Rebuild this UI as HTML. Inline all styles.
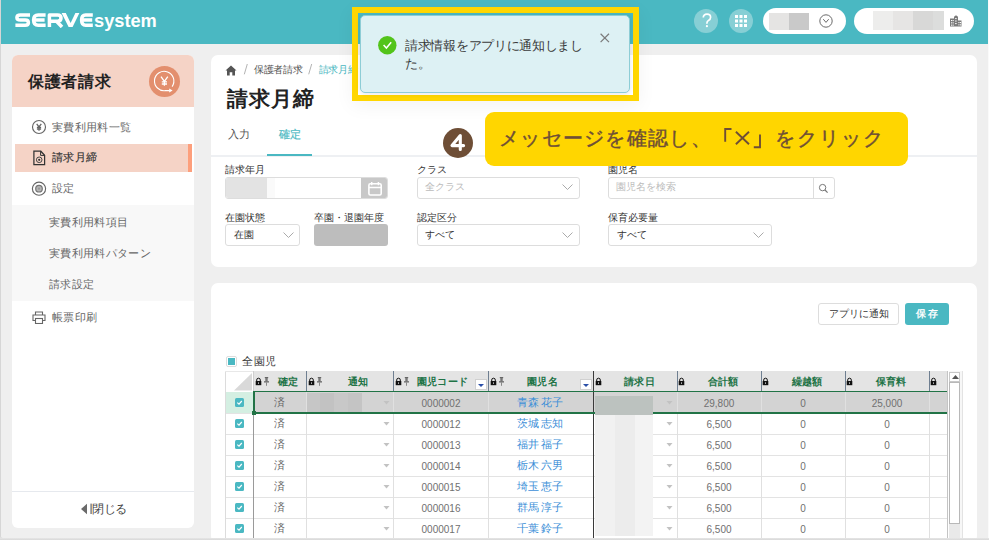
<!DOCTYPE html>
<html lang="ja">
<head>
<meta charset="utf-8">
<style>
*{box-sizing:border-box;margin:0;padding:0}
html,body{width:989px;height:540px;overflow:hidden;background:#fff}
body{font-family:"Liberation Sans",sans-serif;color:#333;position:relative}
.a{position:absolute}
#frame{left:0;top:0;width:988px;height:540px;background:#efefef;border-left:1.5px solid #d6d6d6;border-bottom:2px solid #dcdcdc;border-radius:0 0 0 4px;overflow:hidden}
#hdr{left:1px;top:0;width:987px;height:43.5px;background:#4ab8c2}
.logo{left:15px;top:10px;color:#fff;font-weight:bold;white-space:nowrap}
.hc{width:24px;height:24px;border-radius:50%;background:#87cfd5}
.pill{background:#fff;border-radius:13px}
.card{background:#fff;border-radius:7px}
.t{white-space:nowrap;line-height:1}
</style>
</head>
<body>
<div id="frame" class="a"></div>
<div id="hdr" class="a"></div>
<div class="a" style="left:988px;top:0;width:1px;height:540px;background:#fafafa"></div>

<!-- logo -->
<svg class="a" style="left:15px;top:13px" width="80" height="15" viewBox="0 0 80 15">
<g fill="none" stroke="#fff" stroke-width="3.5" stroke-linejoin="round">
<path d="M15 1.9 H5.4 Q1.9 1.9 1.9 4.5 Q1.9 7.1 5.4 7.1 H10.2 Q13.4 7.1 13.4 9.7 Q13.4 12.2 10.2 12.2 H0.4"/>
<path d="M30.6 1.9 H23.2 Q18.6 1.9 18.6 7 Q18.6 12.2 23.2 12.2 H30.6 M20.2 7 H29.6"/>
<path d="M34.4 14 V1.9 H42.6 Q46 1.9 46 5.1 Q46 8.2 42.6 8.2 H35.5 M41.5 8.2 L47 14"/>
<path d="M77.8 1.9 H70.6 Q66.6 1.9 66.6 7 Q66.6 12.2 70.6 12.2 H77.8 M68.2 7 H77.2"/>
</g>
<path d="M46.6 0 H50.8 L55.6 10 L60.4 0 H64.4 L57.6 14 H53.6 Z" fill="#fff"/>
</svg>
<div class="a t" style="left:94px;top:11.5px;font-size:18.5px;font-weight:bold;color:#fff;transform:scaleX(0.985);transform-origin:0 0">system</div>

<!-- header icons -->
<div class="a hc" style="left:694px;top:9px"></div>
<svg class="a" style="left:701px;top:13px" width="12" height="15" viewBox="0 0 12 15"><path d="M2.3 4.6 Q2.3 1.2 6 1.2 Q9.6 1.2 9.6 4.3 Q9.6 6.4 7.4 7.5 Q5.9 8.3 5.9 10.2 V10.8" fill="none" stroke="#fff" stroke-width="1.7"/><circle cx="5.9" cy="13.2" r="1.1" fill="#fff"/></svg>
<div class="a hc" style="left:729px;top:9px"></div>
<svg class="a" style="left:735px;top:15px" width="12" height="12" viewBox="0 0 12 12" fill="#fff">
<rect x="0" y="0" width="3" height="3"/><rect x="4.5" y="0" width="3" height="3"/><rect x="9" y="0" width="3" height="3"/>
<rect x="0" y="4.5" width="3" height="3"/><rect x="4.5" y="4.5" width="3" height="3"/><rect x="9" y="4.5" width="3" height="3"/>
<rect x="0" y="9" width="3" height="3"/><rect x="4.5" y="9" width="3" height="3"/><rect x="9" y="9" width="3" height="3"/>
</svg>
<div class="a pill" style="left:763px;top:8px;width:83px;height:26px"></div>
<div class="a" style="left:769px;top:13px;width:20px;height:17px;background:#e5e4e3"></div>
<div class="a" style="left:789px;top:13px;width:20px;height:17px;background:#c9c9c9"></div>
<svg class="a" style="left:818.5px;top:14px" width="14" height="14" viewBox="0 0 14 14"><circle cx="7" cy="7" r="6.2" fill="none" stroke="#6a6a6a" stroke-width="1"/><path d="M4.3 5.2 L7 8.4 L9.7 5.2" fill="none" stroke="#6a6a6a" stroke-width="1"/></svg>
<div class="a pill" style="left:854px;top:8px;width:120px;height:26px"></div>
<div class="a" style="left:873px;top:11px;width:20px;height:19px;background:#ededec"></div>
<div class="a" style="left:893px;top:11px;width:20px;height:19px;background:#e6e5e4"></div>
<div class="a" style="left:913px;top:11px;width:20px;height:19px;background:#d8d8d7"></div>
<div class="a" style="left:933px;top:11px;width:11px;height:19px;background:#dcdddc"></div>
<svg class="a" style="left:950px;top:15px" width="12" height="12" viewBox="0 0 12 12"><path d="M0 3.5 H4 V1.8 L6 0.3 L8 1.8 V5.5 H11.5 V11.5 H0 Z" fill="#7a7a7a"/><g fill="#fff"><rect x="1" y="5" width="1.1" height="1.1"/><rect x="2.6" y="5" width="1.1" height="1.1"/><rect x="1" y="7.3" width="1.1" height="1.1"/><rect x="2.6" y="7.3" width="1.1" height="1.1"/><rect x="1" y="9.6" width="1.1" height="1.1"/><rect x="2.6" y="9.6" width="1.1" height="1.1"/><rect x="5.2" y="3" width="1.4" height="1.1"/><rect x="5.2" y="5.5" width="1.4" height="1.1"/><rect x="5.2" y="8" width="1.4" height="1.1"/><rect x="8.4" y="7" width="1.1" height="1.1"/><rect x="10" y="7" width="1.1" height="1.1"/><rect x="8.4" y="9.3" width="1.1" height="1.1"/><rect x="10" y="9.3" width="1.1" height="1.1"/></g></svg>

<!-- sidebar -->
<div class="a card" style="left:12px;top:55px;width:182.4px;height:473px;border-radius:6px;overflow:hidden"><div class="a" style="left:1px;top:0;width:181px;height:473px">
  <div class="a" style="left:-1px;top:0;width:183px;height:52px;background:#f5d3c6"></div>
  <div class="a t" style="left:15px;top:19px;font-size:16px;letter-spacing:0.7px;font-weight:bold;color:#222">保護者請求</div>
  <div class="a" style="left:136px;top:11px;width:31px;height:31px;border-radius:50%;background:#e38f6e"></div>
  <svg class="a" style="left:136px;top:11px" width="31" height="31" viewBox="149 66 31 31"><path d="M172.1 86.6 A9.7 9.7 0 1 0 165.6 90.6 H169.6" fill="none" stroke="#fff" stroke-width="1.1"/><path d="M169.2 88.6 L172.6 90.6 L169.2 92.5 Z" fill="#fff"/><path d="M161 76.6 L164.4 81.4 L167.8 76.6 M164.4 81.4 V85.8 M161.8 81.9 H167 M161.8 84 H167" fill="none" stroke="#fff" stroke-width="1.3"/></svg>
  <!-- items -->
  <svg class="a" style="left:18px;top:64px" width="16" height="16" viewBox="31 119 16 16"><circle cx="39" cy="127" r="6.5" fill="none" stroke="#666" stroke-width="1.15"/><path d="M36.7 123.9 L39 126.9 L41.3 123.9 M39 126.9 V130.7 M36.9 127.4 H41.1 M36.9 129 H41.1" fill="none" stroke="#666" stroke-width="1.3"/></svg>
  <div class="a t" style="left:39px;top:67px;font-size:11px;letter-spacing:0.35px;color:#666">実費利用料一覧</div>
  <div class="a" style="left:2px;top:89px;width:177px;height:28px;background:#f5d3c6"></div>
  <div class="a" style="left:175px;top:89px;width:4px;height:28px;background:#fd9f7c"></div>
  <svg class="a" style="left:19px;top:94px" width="15" height="18" viewBox="32 149 15 18"><path d="M33.9 151.2 H40.8 L44.6 155.2 V164.5 H33.9 Z" fill="none" stroke="#333" stroke-width="1.25"/><path d="M40.6 151.2 V155.4 H44.6" fill="none" stroke="#333" stroke-width="1"/><circle cx="39.2" cy="159.8" r="2.8" fill="none" stroke="#444" stroke-width="1"/><circle cx="39.2" cy="159.8" r="1.1" fill="#333"/></svg>
  <div class="a t" style="left:39px;top:97px;font-size:11px;letter-spacing:0.35px;color:#333;-webkit-text-stroke:0.15px #333">請求月締</div>
  <svg class="a" style="left:18px;top:125px" width="16" height="16" viewBox="31 180 16 16"><circle cx="39" cy="188.7" r="6.6" fill="none" stroke="#666" stroke-width="1.15"/><circle cx="39" cy="188.7" r="3.3" fill="#b5b5b5" stroke="#777" stroke-width="1.2"/><circle cx="39" cy="188.7" r="1.1" fill="#999"/></svg>
  <div class="a t" style="left:39px;top:128px;font-size:11px;letter-spacing:0.35px;color:#666">設定</div>
  <div class="a" style="left:-1px;top:150px;width:183px;height:96px;background:#f8f8f8"></div>
  <div class="a t" style="left:36px;top:162px;font-size:11px;letter-spacing:0.35px;color:#666">実費利用料項目</div>
  <div class="a t" style="left:36px;top:193px;font-size:11px;letter-spacing:0.35px;color:#666">実費利用料パターン</div>
  <div class="a t" style="left:36px;top:224px;font-size:11px;letter-spacing:0.35px;color:#666">請求設定</div>
  <svg class="a" style="left:19px;top:256px" width="14" height="13" viewBox="0 0 14 13"><path d="M3.5 4 V1 H10.5 V4" fill="none" stroke="#666" stroke-width="1.1"/><path d="M3 9.5 H1 V4 H13 V9.5 H11" fill="none" stroke="#666" stroke-width="1.1"/><rect x="3.5" y="7.5" width="7" height="5" fill="none" stroke="#666" stroke-width="1.1"/></svg>
  <div class="a t" style="left:39px;top:257px;font-size:11px;letter-spacing:0.35px;color:#666">帳票印刷</div>
  <div class="a" style="left:-1px;top:436px;width:183px;height:1px;background:#e6e9ee"></div>
  <svg class="a" style="left:67px;top:447px" width="12" height="14" viewBox="80 502 12 14"><path d="M81 509 L87 503.8 V514.2 Z" fill="#6a6a6a"/><rect x="90.4" y="503.6" width="1.4" height="10.4" fill="#7a7a7a"/></svg>
  <div class="a t" style="left:79px;top:448px;font-size:12px;letter-spacing:-0.4px;color:#444">閉じる</div></div>
</div>

<!-- main card 1 -->
<div class="a card" style="left:211px;top:55px;width:766px;height:212px;overflow:hidden">
  <svg class="a" style="left:14px;top:10px" width="12" height="11" viewBox="0 0 12 11"><path d="M6 0.5 L11.5 5.5 H10 V10.5 H7.3 V7.3 H4.7 V10.5 H2 V5.5 H0.5 Z" fill="#555"/></svg>
  <svg class="a" style="left:30px;top:8px" width="8" height="12" viewBox="0 0 8 12"><path d="M6.3 1 L3.3 11.3" stroke="#aaa" stroke-width="0.9"/></svg>
  <div class="a t" style="left:43px;top:10px;font-size:10px;letter-spacing:-0.3px;color:#555">保護者請求</div>
  <svg class="a" style="left:95px;top:8px" width="8" height="12" viewBox="0 0 8 12"><path d="M5.7 1 L2.7 11.3" stroke="#aaa" stroke-width="0.9"/></svg>
  <div class="a t" style="left:107.5px;top:10px;font-size:10px;letter-spacing:-0.2px;color:#4ab8c2">請求月締</div>
  <div class="a t" style="left:15.5px;top:32.5px;font-size:21px;letter-spacing:1.2px;font-weight:bold;color:#222">請求月締</div>
  <div class="a t" style="left:17px;top:74px;font-size:11px;letter-spacing:0.3px;color:#555">入力</div>
  <div class="a t" style="left:68px;top:74px;font-size:11px;letter-spacing:0.3px;color:#4ab8c2;-webkit-text-stroke:0.2px #4ab8c2">確定</div>
  <div class="a" style="left:0;top:100px;width:766px;height:2px;background:#eef0f3"></div>
  <div class="a" style="left:56px;top:99px;width:45px;height:2px;background:#4ab8c2"></div>
  <!-- form row 1 -->
  <div class="a t" style="left:14px;top:110px;font-size:10px;color:#333">請求年月</div>
  <div class="a" style="left:14px;top:122px;width:163px;height:22px;border:1px solid #ddd;border-radius:3px;overflow:hidden">
    <div class="a" style="left:0;top:0;width:41px;height:20px;background:#e3e3e3"></div><div class="a" style="left:41px;top:0;width:8px;height:20px;background:#fafafa"></div>
    <div class="a" style="left:135px;top:0;width:27px;height:20px;background:#c8c8c8"></div>
    <svg class="a" style="left:140.5px;top:2.5px" width="16" height="16" viewBox="0 0 16 16"><rect x="1.9" y="2.8" width="12.3" height="11.2" rx="1.4" fill="none" stroke="#fff" stroke-width="1.6"/><path d="M1.9 6.4 H14.2 M4.7 1 V4.2 M11.4 1 V4.2" stroke="#fff" stroke-width="1.5"/></svg>
  </div>
  <div class="a t" style="left:206px;top:110px;font-size:10px;color:#333">クラス</div>
  <div class="a" style="left:206px;top:122px;width:163px;height:22px;border:1px solid #ddd;border-radius:3px"></div>
  <div class="a t" style="left:214px;top:127px;font-size:10px;color:#bbb">全クラス</div>
  <svg class="a" style="left:351px;top:129px" width="11" height="7" viewBox="0 0 11 7"><path d="M0.5 0.5 L5.5 5.5 L10.5 0.5" fill="none" stroke="#aaa" stroke-width="1"/></svg>
  <div class="a t" style="left:397px;top:110px;font-size:10px;color:#333">園児名</div>
  <div class="a" style="left:397px;top:122px;width:227px;height:22px;border:1px solid #ddd;border-radius:3px"></div>
  <div class="a" style="left:602px;top:122px;width:1px;height:22px;background:#ddd"></div>
  <div class="a t" style="left:405px;top:127px;font-size:10px;color:#bbb">園児名を検索</div>
  <svg class="a" style="left:607px;top:128px" width="11" height="11" viewBox="0 0 11 11"><circle cx="4.6" cy="4.6" r="3.2" fill="none" stroke="#777" stroke-width="1"/><path d="M7 7 L9.6 9.6" stroke="#777" stroke-width="1.2"/></svg>
  <!-- form row 2 -->
  <div class="a t" style="left:14px;top:158px;font-size:10px;color:#333">在園状態</div>
  <div class="a" style="left:14px;top:169px;width:75px;height:22px;border:1px solid #ddd;border-radius:3px"></div>
  <div class="a t" style="left:23px;top:175px;font-size:10px;color:#333">在園</div>
  <svg class="a" style="left:72px;top:177px" width="11" height="7" viewBox="0 0 11 7"><path d="M0.5 0.5 L5.5 5.5 L10.5 0.5" fill="none" stroke="#aaa" stroke-width="1"/></svg>
  <div class="a t" style="left:103px;top:158px;font-size:10px;color:#333">卒園・退園年度</div>
  <div class="a" style="left:103px;top:169px;width:74px;height:22px;background:#bdbdbd;border-radius:3px"></div>
  <div class="a t" style="left:206px;top:158px;font-size:10px;color:#333">認定区分</div>
  <div class="a" style="left:206px;top:169px;width:163px;height:22px;border:1px solid #ddd;border-radius:3px"></div>
  <div class="a t" style="left:214px;top:175px;font-size:10px;color:#333">すべて</div>
  <svg class="a" style="left:351px;top:177px" width="11" height="7" viewBox="0 0 11 7"><path d="M0.5 0.5 L5.5 5.5 L10.5 0.5" fill="none" stroke="#aaa" stroke-width="1"/></svg>
  <div class="a t" style="left:397px;top:158px;font-size:10px;color:#333">保育必要量</div>
  <div class="a" style="left:397px;top:169px;width:164px;height:22px;border:1px solid #ddd;border-radius:3px"></div>
  <div class="a t" style="left:406px;top:175px;font-size:10px;color:#333">すべて</div>
  <svg class="a" style="left:542px;top:177px" width="11" height="7" viewBox="0 0 11 7"><path d="M0.5 0.5 L5.5 5.5 L10.5 0.5" fill="none" stroke="#aaa" stroke-width="1"/></svg>
</div>
<!-- main card 2 -->
<div class="a card" style="left:211px;top:283px;width:766px;height:260px;overflow:hidden">
  <div class="a" style="left:607px;top:20px;width:81px;height:22px;border:1px solid #ddd;border-radius:3px;background:#fff"></div>
  <div class="a t" style="left:618px;top:26px;font-size:10px;color:#333">アプリに通知</div>
  <div class="a" style="left:694px;top:20px;width:44px;height:22px;border-radius:3px;background:#4ab8c2"></div>
  <div class="a t" style="left:705px;top:26px;font-size:10px;color:#fff;letter-spacing:1.6px;-webkit-text-stroke:0.35px #fff">保存</div>
  <div class="a" style="left:15px;top:73px;width:11px;height:11px;border:1px solid #ddd;border-radius:2px;background:#fff"></div>
  <div class="a" style="left:17px;top:75px;width:7px;height:7px;background:#4ab8c2"></div>
  <div class="a t" style="left:31px;top:73px;font-size:11px;letter-spacing:0.6px;color:#333">全園児</div>
</div>



<div id="grid" class="a" style="left:225px;top:371px;width:738px;height:169px;overflow:hidden">
<div class="a" style="left:28px;top:0px;width:694px;height:20px;background:#e4e4e4"></div>
<div class="a" style="left:0px;top:0px;width:28px;height:20px;background:#fff"></div>
<svg class="a" style="left:0;top:0" width="28" height="20" viewBox="0 0 28 20"><path d="M27 2 V19.5 H9 Z" fill="#d9d9d9"/></svg>
<div class="a" style="left:0px;top:21px;width:722px;height:21px;background:#d3d3d3"></div>
<div class="a" style="left:0px;top:21px;width:28px;height:21px;background:#d4efe2"></div>
<div class="a" style="left:0px;top:42px;width:722px;height:21px;background:#fff"></div>
<div class="a" style="left:0px;top:63px;width:722px;height:21px;background:#fff"></div>
<div class="a" style="left:0px;top:84px;width:722px;height:21px;background:#fff"></div>
<div class="a" style="left:0px;top:105px;width:722px;height:21px;background:#fff"></div>
<div class="a" style="left:0px;top:126px;width:722px;height:21px;background:#fff"></div>
<div class="a" style="left:0px;top:147px;width:722px;height:21px;background:#fff"></div>
<div class="a" style="left:0px;top:42px;width:722px;height:1px;background:#e3e3e3"></div>
<div class="a" style="left:0px;top:63px;width:722px;height:1px;background:#e3e3e3"></div>
<div class="a" style="left:0px;top:84px;width:722px;height:1px;background:#e3e3e3"></div>
<div class="a" style="left:0px;top:105px;width:722px;height:1px;background:#e3e3e3"></div>
<div class="a" style="left:0px;top:126px;width:722px;height:1px;background:#e3e3e3"></div>
<div class="a" style="left:0px;top:147px;width:722px;height:1px;background:#e3e3e3"></div>
<div class="a" style="left:0px;top:168px;width:722px;height:1px;background:#e3e3e3"></div>
<div class="a" style="left:28px;top:21px;width:1px;height:160px;background:#9a9a9a"></div>
<div class="a" style="left:81px;top:21px;width:1px;height:160px;background:#e0e0e0"></div>
<div class="a" style="left:168px;top:21px;width:1px;height:160px;background:#e0e0e0"></div>
<div class="a" style="left:263px;top:21px;width:1px;height:160px;background:#e0e0e0"></div>
<div class="a" style="left:368px;top:21px;width:1px;height:160px;background:#e0e0e0"></div>
<div class="a" style="left:452px;top:21px;width:1px;height:160px;background:#e0e0e0"></div>
<div class="a" style="left:536px;top:21px;width:1px;height:160px;background:#e0e0e0"></div>
<div class="a" style="left:620px;top:21px;width:1px;height:160px;background:#e0e0e0"></div>
<div class="a" style="left:704px;top:21px;width:1px;height:160px;background:#e0e0e0"></div>
<div class="a" style="left:368px;top:0px;width:1px;height:170px;background:#3a3a3a"></div>
<div class="a" style="left:81px;top:0px;width:1px;height:20px;background:#6f7f91"></div>
<div class="a" style="left:168px;top:0px;width:1px;height:20px;background:#6f7f91"></div>
<div class="a" style="left:263px;top:0px;width:1px;height:20px;background:#6f7f91"></div>
<div class="a" style="left:452px;top:0px;width:1px;height:20px;background:#6f7f91"></div>
<div class="a" style="left:536px;top:0px;width:1px;height:20px;background:#6f7f91"></div>
<div class="a" style="left:620px;top:0px;width:1px;height:20px;background:#6f7f91"></div>
<div class="a" style="left:704px;top:0px;width:1px;height:20px;background:#6f7f91"></div>
<div class="a" style="left:28px;top:0px;width:1px;height:20px;background:#cfcfcf"></div>
<div class="a" style="left:0px;top:0px;width:1px;height:170px;background:#dcdcdc"></div>
<div class="a" style="left:0px;top:0px;width:28px;height:1px;background:#e8e8e8"></div>
<div class="a" style="left:722px;top:0px;width:1.2px;height:170px;background:#c4c4c4"></div>
<div class="a" style="left:28px;top:19.600000000000023px;width:694px;height:1.7px;background:#217346"></div>
<div class="a" style="left:28px;top:41.39999999999998px;width:694px;height:1.7px;background:#217346"></div>
<div class="a" style="left:28px;top:19.600000000000023px;width:1.6px;height:23px;background:#217346"></div>
<div class="a" style="left:27px;top:40px;width:4px;height:4px;background:#217346"></div>
<svg class="a" style="left:30px;top:6px" width="7" height="9" viewBox="0 0 7 9"><path d="M1.7 4.2 V3 A1.8 1.8 0 0 1 5.3 3 V4.2" fill="none" stroke="#111" stroke-width="1"/><rect x="0.7" y="4" width="5.6" height="4.2" fill="#111"/><rect x="3.1" y="5.4" width="0.9" height="1.4" fill="#e4e4e4"/></svg>
<svg class="a" style="left:39px;top:6px" width="5" height="9" viewBox="0 0 5 9"><rect x="0.8" y="0" width="3.4" height="1.2" fill="#666"/><rect x="1.3" y="1" width="2.4" height="3.4" fill="#777"/><rect x="0" y="4.2" width="5" height="1.3" fill="#666"/><rect x="2" y="5.3" width="1" height="3.5" fill="#888"/></svg>
<div class="a t" style="left:46px;top:6px;width:35px;text-align:center;font-size:10px;font-weight:bold;letter-spacing:0.3px;color:#217346">確定</div>
<svg class="a" style="left:83px;top:6px" width="7" height="9" viewBox="0 0 7 9"><path d="M1.7 4.2 V3 A1.8 1.8 0 0 1 5.3 3 V4.2" fill="none" stroke="#111" stroke-width="1"/><rect x="0.7" y="4" width="5.6" height="4.2" fill="#111"/><rect x="3.1" y="5.4" width="0.9" height="1.4" fill="#e4e4e4"/></svg>
<svg class="a" style="left:92px;top:6px" width="5" height="9" viewBox="0 0 5 9"><rect x="0.8" y="0" width="3.4" height="1.2" fill="#666"/><rect x="1.3" y="1" width="2.4" height="3.4" fill="#777"/><rect x="0" y="4.2" width="5" height="1.3" fill="#666"/><rect x="2" y="5.3" width="1" height="3.5" fill="#888"/></svg>
<div class="a t" style="left:99px;top:6px;width:69px;text-align:center;font-size:10px;font-weight:bold;letter-spacing:0.3px;color:#217346">通知</div>
<svg class="a" style="left:170px;top:6px" width="7" height="9" viewBox="0 0 7 9"><path d="M1.7 4.2 V3 A1.8 1.8 0 0 1 5.3 3 V4.2" fill="none" stroke="#111" stroke-width="1"/><rect x="0.7" y="4" width="5.6" height="4.2" fill="#111"/><rect x="3.1" y="5.4" width="0.9" height="1.4" fill="#e4e4e4"/></svg>
<svg class="a" style="left:179px;top:6px" width="5" height="9" viewBox="0 0 5 9"><rect x="0.8" y="0" width="3.4" height="1.2" fill="#666"/><rect x="1.3" y="1" width="2.4" height="3.4" fill="#777"/><rect x="0" y="4.2" width="5" height="1.3" fill="#666"/><rect x="2" y="5.3" width="1" height="3.5" fill="#888"/></svg>
<div class="a t" style="left:186px;top:6px;width:63px;text-align:center;font-size:10px;font-weight:bold;letter-spacing:0.3px;color:#217346">園児コード</div>
<svg class="a" style="left:265px;top:6px" width="7" height="9" viewBox="0 0 7 9"><path d="M1.7 4.2 V3 A1.8 1.8 0 0 1 5.3 3 V4.2" fill="none" stroke="#111" stroke-width="1"/><rect x="0.7" y="4" width="5.6" height="4.2" fill="#111"/><rect x="3.1" y="5.4" width="0.9" height="1.4" fill="#e4e4e4"/></svg>
<svg class="a" style="left:274px;top:6px" width="5" height="9" viewBox="0 0 5 9"><rect x="0.8" y="0" width="3.4" height="1.2" fill="#666"/><rect x="1.3" y="1" width="2.4" height="3.4" fill="#777"/><rect x="0" y="4.2" width="5" height="1.3" fill="#666"/><rect x="2" y="5.3" width="1" height="3.5" fill="#888"/></svg>
<div class="a t" style="left:281px;top:6px;width:73px;text-align:center;font-size:10px;font-weight:bold;letter-spacing:0.3px;color:#217346">園児名</div>
<svg class="a" style="left:370px;top:6px" width="7" height="9" viewBox="0 0 7 9"><path d="M1.7 4.2 V3 A1.8 1.8 0 0 1 5.3 3 V4.2" fill="none" stroke="#111" stroke-width="1"/><rect x="0.7" y="4" width="5.6" height="4.2" fill="#111"/><rect x="3.1" y="5.4" width="0.9" height="1.4" fill="#e4e4e4"/></svg>
<div class="a t" style="left:377px;top:6px;width:75px;text-align:center;font-size:10px;font-weight:bold;letter-spacing:0.3px;color:#217346">請求日</div>
<svg class="a" style="left:453px;top:6px" width="7" height="9" viewBox="0 0 7 9"><path d="M1.7 4.2 V3 A1.8 1.8 0 0 1 5.3 3 V4.2" fill="none" stroke="#111" stroke-width="1"/><rect x="0.7" y="4" width="5.6" height="4.2" fill="#111"/><rect x="3.1" y="5.4" width="0.9" height="1.4" fill="#e4e4e4"/></svg>
<div class="a t" style="left:460px;top:6px;width:76px;text-align:center;font-size:10px;font-weight:bold;letter-spacing:0.3px;color:#217346">合計額</div>
<svg class="a" style="left:537px;top:6px" width="7" height="9" viewBox="0 0 7 9"><path d="M1.7 4.2 V3 A1.8 1.8 0 0 1 5.3 3 V4.2" fill="none" stroke="#111" stroke-width="1"/><rect x="0.7" y="4" width="5.6" height="4.2" fill="#111"/><rect x="3.1" y="5.4" width="0.9" height="1.4" fill="#e4e4e4"/></svg>
<div class="a t" style="left:544px;top:6px;width:76px;text-align:center;font-size:10px;font-weight:bold;letter-spacing:0.3px;color:#217346">繰越額</div>
<svg class="a" style="left:621px;top:6px" width="7" height="9" viewBox="0 0 7 9"><path d="M1.7 4.2 V3 A1.8 1.8 0 0 1 5.3 3 V4.2" fill="none" stroke="#111" stroke-width="1"/><rect x="0.7" y="4" width="5.6" height="4.2" fill="#111"/><rect x="3.1" y="5.4" width="0.9" height="1.4" fill="#e4e4e4"/></svg>
<div class="a t" style="left:628px;top:6px;width:76px;text-align:center;font-size:10px;font-weight:bold;letter-spacing:0.3px;color:#217346">保育料</div>
<svg class="a" style="left:705px;top:6px" width="7" height="9" viewBox="0 0 7 9"><path d="M1.7 4.2 V3 A1.8 1.8 0 0 1 5.3 3 V4.2" fill="none" stroke="#111" stroke-width="1"/><rect x="0.7" y="4" width="5.6" height="4.2" fill="#111"/><rect x="3.1" y="5.4" width="0.9" height="1.4" fill="#e4e4e4"/></svg>
<div class="a" style="left:250px;top:8px;width:12px;height:11px;background:#fff;border:1px solid #d0d0d0"></div>
<svg class="a" style="left:253px;top:13px" width="6" height="3" viewBox="0 0 6 3"><path d="M0 0 H6 L3 3 Z" fill="#2b4fa8"/></svg>
<div class="a" style="left:355px;top:8px;width:12px;height:11px;background:#fff;border:1px solid #d0d0d0"></div>
<svg class="a" style="left:358px;top:13px" width="6" height="3" viewBox="0 0 6 3"><path d="M0 0 H6 L3 3 Z" fill="#2b4fa8"/></svg>
<div class="a" style="left:10px;top:27px;width:9px;height:9px;background:#4ab8c2;border-radius:1.5px"></div>
<svg class="a" style="left:11px;top:28px" width="7" height="7" viewBox="0 0 7 7"><path d="M1.3 3.6 L3 5.1 L5.8 2" fill="none" stroke="#fff" stroke-width="1.2"/></svg>
<div class="a t" style="left:28px;top:26px;width:53px;text-align:center;font-size:11px;color:#666">済</div>
<svg class="a" style="left:158px;top:30px" width="7" height="4" viewBox="0 0 7 4"><path d="M0.5 0 H6.5 L3.5 3.6 Z" fill="#c2c2c2"/></svg>
<div class="a t" style="left:168px;top:28px;width:96px;text-align:center;font-size:10px;color:#707070">0000002</div>
<div class="a t" style="left:263px;top:26px;width:104px;text-align:center;font-size:11px;letter-spacing:-0.2px;color:#3d8fd8">青森<span style="letter-spacing:0">&#8201;</span>花子</div>
<svg class="a" style="left:441px;top:30px" width="7" height="4" viewBox="0 0 7 4"><path d="M0.5 0 H6.5 L3.5 3.6 Z" fill="#c2c2c2"/></svg>
<div class="a t" style="left:452px;top:28px;width:84px;text-align:center;font-size:10px;color:#707070">29,800</div>
<div class="a t" style="left:536px;top:28px;width:84px;text-align:center;font-size:10px;color:#707070">0</div>
<div class="a t" style="left:620px;top:28px;width:84px;text-align:center;font-size:10px;color:#707070">25,000</div>
<div class="a" style="left:10px;top:48px;width:9px;height:9px;background:#4ab8c2;border-radius:1.5px"></div>
<svg class="a" style="left:11px;top:49px" width="7" height="7" viewBox="0 0 7 7"><path d="M1.3 3.6 L3 5.1 L5.8 2" fill="none" stroke="#fff" stroke-width="1.2"/></svg>
<div class="a t" style="left:28px;top:47px;width:53px;text-align:center;font-size:11px;color:#666">済</div>
<svg class="a" style="left:158px;top:51px" width="7" height="4" viewBox="0 0 7 4"><path d="M0.5 0 H6.5 L3.5 3.6 Z" fill="#c2c2c2"/></svg>
<div class="a t" style="left:168px;top:49px;width:96px;text-align:center;font-size:10px;color:#707070">0000012</div>
<div class="a t" style="left:263px;top:47px;width:104px;text-align:center;font-size:11px;letter-spacing:-0.2px;color:#3d8fd8">茨城<span style="letter-spacing:0">&#8201;</span>志知</div>
<svg class="a" style="left:441px;top:51px" width="7" height="4" viewBox="0 0 7 4"><path d="M0.5 0 H6.5 L3.5 3.6 Z" fill="#c2c2c2"/></svg>
<div class="a t" style="left:452px;top:49px;width:84px;text-align:center;font-size:10px;color:#707070">6,500</div>
<div class="a t" style="left:536px;top:49px;width:84px;text-align:center;font-size:10px;color:#707070">0</div>
<div class="a t" style="left:620px;top:49px;width:84px;text-align:center;font-size:10px;color:#707070">0</div>
<div class="a" style="left:10px;top:69px;width:9px;height:9px;background:#4ab8c2;border-radius:1.5px"></div>
<svg class="a" style="left:11px;top:70px" width="7" height="7" viewBox="0 0 7 7"><path d="M1.3 3.6 L3 5.1 L5.8 2" fill="none" stroke="#fff" stroke-width="1.2"/></svg>
<div class="a t" style="left:28px;top:68px;width:53px;text-align:center;font-size:11px;color:#666">済</div>
<svg class="a" style="left:158px;top:72px" width="7" height="4" viewBox="0 0 7 4"><path d="M0.5 0 H6.5 L3.5 3.6 Z" fill="#c2c2c2"/></svg>
<div class="a t" style="left:168px;top:70px;width:96px;text-align:center;font-size:10px;color:#707070">0000013</div>
<div class="a t" style="left:263px;top:68px;width:104px;text-align:center;font-size:11px;letter-spacing:-0.2px;color:#3d8fd8">福井<span style="letter-spacing:0">&#8201;</span>福子</div>
<svg class="a" style="left:441px;top:72px" width="7" height="4" viewBox="0 0 7 4"><path d="M0.5 0 H6.5 L3.5 3.6 Z" fill="#c2c2c2"/></svg>
<div class="a t" style="left:452px;top:70px;width:84px;text-align:center;font-size:10px;color:#707070">6,500</div>
<div class="a t" style="left:536px;top:70px;width:84px;text-align:center;font-size:10px;color:#707070">0</div>
<div class="a t" style="left:620px;top:70px;width:84px;text-align:center;font-size:10px;color:#707070">0</div>
<div class="a" style="left:10px;top:90px;width:9px;height:9px;background:#4ab8c2;border-radius:1.5px"></div>
<svg class="a" style="left:11px;top:91px" width="7" height="7" viewBox="0 0 7 7"><path d="M1.3 3.6 L3 5.1 L5.8 2" fill="none" stroke="#fff" stroke-width="1.2"/></svg>
<div class="a t" style="left:28px;top:89px;width:53px;text-align:center;font-size:11px;color:#666">済</div>
<svg class="a" style="left:158px;top:93px" width="7" height="4" viewBox="0 0 7 4"><path d="M0.5 0 H6.5 L3.5 3.6 Z" fill="#c2c2c2"/></svg>
<div class="a t" style="left:168px;top:91px;width:96px;text-align:center;font-size:10px;color:#707070">0000014</div>
<div class="a t" style="left:263px;top:89px;width:104px;text-align:center;font-size:11px;letter-spacing:-0.2px;color:#3d8fd8">栃木<span style="letter-spacing:0">&#8201;</span>六男</div>
<svg class="a" style="left:441px;top:93px" width="7" height="4" viewBox="0 0 7 4"><path d="M0.5 0 H6.5 L3.5 3.6 Z" fill="#c2c2c2"/></svg>
<div class="a t" style="left:452px;top:91px;width:84px;text-align:center;font-size:10px;color:#707070">6,500</div>
<div class="a t" style="left:536px;top:91px;width:84px;text-align:center;font-size:10px;color:#707070">0</div>
<div class="a t" style="left:620px;top:91px;width:84px;text-align:center;font-size:10px;color:#707070">0</div>
<div class="a" style="left:10px;top:111px;width:9px;height:9px;background:#4ab8c2;border-radius:1.5px"></div>
<svg class="a" style="left:11px;top:112px" width="7" height="7" viewBox="0 0 7 7"><path d="M1.3 3.6 L3 5.1 L5.8 2" fill="none" stroke="#fff" stroke-width="1.2"/></svg>
<div class="a t" style="left:28px;top:110px;width:53px;text-align:center;font-size:11px;color:#666">済</div>
<svg class="a" style="left:158px;top:114px" width="7" height="4" viewBox="0 0 7 4"><path d="M0.5 0 H6.5 L3.5 3.6 Z" fill="#c2c2c2"/></svg>
<div class="a t" style="left:168px;top:112px;width:96px;text-align:center;font-size:10px;color:#707070">0000015</div>
<div class="a t" style="left:263px;top:110px;width:104px;text-align:center;font-size:11px;letter-spacing:-0.2px;color:#3d8fd8">埼玉<span style="letter-spacing:0">&#8201;</span>恵子</div>
<svg class="a" style="left:441px;top:114px" width="7" height="4" viewBox="0 0 7 4"><path d="M0.5 0 H6.5 L3.5 3.6 Z" fill="#c2c2c2"/></svg>
<div class="a t" style="left:452px;top:112px;width:84px;text-align:center;font-size:10px;color:#707070">6,500</div>
<div class="a t" style="left:536px;top:112px;width:84px;text-align:center;font-size:10px;color:#707070">0</div>
<div class="a t" style="left:620px;top:112px;width:84px;text-align:center;font-size:10px;color:#707070">0</div>
<div class="a" style="left:10px;top:132px;width:9px;height:9px;background:#4ab8c2;border-radius:1.5px"></div>
<svg class="a" style="left:11px;top:133px" width="7" height="7" viewBox="0 0 7 7"><path d="M1.3 3.6 L3 5.1 L5.8 2" fill="none" stroke="#fff" stroke-width="1.2"/></svg>
<div class="a t" style="left:28px;top:131px;width:53px;text-align:center;font-size:11px;color:#666">済</div>
<svg class="a" style="left:158px;top:135px" width="7" height="4" viewBox="0 0 7 4"><path d="M0.5 0 H6.5 L3.5 3.6 Z" fill="#c2c2c2"/></svg>
<div class="a t" style="left:168px;top:133px;width:96px;text-align:center;font-size:10px;color:#707070">0000016</div>
<div class="a t" style="left:263px;top:131px;width:104px;text-align:center;font-size:11px;letter-spacing:-0.2px;color:#3d8fd8">群馬<span style="letter-spacing:0">&#8201;</span>淳子</div>
<svg class="a" style="left:441px;top:135px" width="7" height="4" viewBox="0 0 7 4"><path d="M0.5 0 H6.5 L3.5 3.6 Z" fill="#c2c2c2"/></svg>
<div class="a t" style="left:452px;top:133px;width:84px;text-align:center;font-size:10px;color:#707070">6,500</div>
<div class="a t" style="left:536px;top:133px;width:84px;text-align:center;font-size:10px;color:#707070">0</div>
<div class="a t" style="left:620px;top:133px;width:84px;text-align:center;font-size:10px;color:#707070">0</div>
<div class="a" style="left:10px;top:153px;width:9px;height:9px;background:#4ab8c2;border-radius:1.5px"></div>
<svg class="a" style="left:11px;top:154px" width="7" height="7" viewBox="0 0 7 7"><path d="M1.3 3.6 L3 5.1 L5.8 2" fill="none" stroke="#fff" stroke-width="1.2"/></svg>
<div class="a t" style="left:28px;top:152px;width:53px;text-align:center;font-size:11px;color:#666">済</div>
<svg class="a" style="left:158px;top:156px" width="7" height="4" viewBox="0 0 7 4"><path d="M0.5 0 H6.5 L3.5 3.6 Z" fill="#c2c2c2"/></svg>
<div class="a t" style="left:168px;top:154px;width:96px;text-align:center;font-size:10px;color:#707070">0000017</div>
<div class="a t" style="left:263px;top:152px;width:104px;text-align:center;font-size:11px;letter-spacing:-0.2px;color:#3d8fd8">千葉<span style="letter-spacing:0">&#8201;</span>鈴子</div>
<svg class="a" style="left:441px;top:156px" width="7" height="4" viewBox="0 0 7 4"><path d="M0.5 0 H6.5 L3.5 3.6 Z" fill="#c2c2c2"/></svg>
<div class="a t" style="left:452px;top:154px;width:84px;text-align:center;font-size:10px;color:#707070">6,500</div>
<div class="a t" style="left:536px;top:154px;width:84px;text-align:center;font-size:10px;color:#707070">0</div>
<div class="a t" style="left:620px;top:154px;width:84px;text-align:center;font-size:10px;color:#707070">0</div>
<div class="a" style="left:82px;top:22px;width:14px;height:19px;background:#c6c6c6"></div>
<div class="a" style="left:95px;top:22px;width:14px;height:19px;background:#c2c2c2"></div>
<div class="a" style="left:109px;top:22px;width:14px;height:19px;background:#c8c8c8"></div>
<div class="a" style="left:123px;top:22px;width:14px;height:19px;background:#c4c4c4"></div>
<div class="a" style="left:370px;top:25px;width:58px;height:19px;background:#bcc2bf"></div>
<div class="a" style="left:370px;top:44px;width:20px;height:121px;background:#f1f1f1"></div>
<div class="a" style="left:390px;top:44px;width:20px;height:121px;background:#ececec"></div>
<div class="a" style="left:410px;top:44px;width:18px;height:121px;background:#f3f3f3"></div>
<div class="a" style="left:723.5px;top:0px;width:14px;height:169px;background:#f7f7f7;border-right:1px solid #e3e3e3"></div>
<div class="a" style="left:724px;top:1px;width:11px;height:10px;background:#fff;border:1px solid #c8c8c8"></div>
<svg class="a" style="left:726.5px;top:4px" width="7" height="4" viewBox="0 0 7 4"><path d="M0 4 H7 L3.5 0 Z" fill="#555"/></svg>
<div class="a" style="left:724px;top:11px;width:11px;height:142px;background:#fff;border:1px solid #b8b8b8"></div>
<div class="a" style="left:724px;top:153px;width:11px;height:16px;background:#e9e9e9"></div>
</div><!--/grid--><div class="a" style="left:0;top:537.6px;width:989px;height:2.4px;background:linear-gradient(#e6e6e6,#d8d8d8)"></div>
<!-- toast highlight -->
<div class="a" style="left:352px;top:7px;width:287px;height:94px;border:6px solid #ffd600;box-shadow:0 5px 18px rgba(0,0,0,0.05)"></div>
<div class="a" style="left:360px;top:15px;width:270px;height:78px;background:#ddf1f4;border:1px solid #8dcdd6;border-radius:5px;box-shadow:0 1px 5px rgba(0,0,0,0.1)"></div>
<svg class="a" style="left:377.5px;top:35.5px" width="19" height="19" viewBox="0 0 19 19"><circle cx="9.3" cy="9.3" r="9.2" fill="#52c41a"/><path d="M5.6 8.9 L8.4 12 L13.2 6.2" fill="none" stroke="#fff" stroke-width="1.5"/></svg>
<div class="a" style="left:405px;top:36.5px;width:185px;font-size:13px;letter-spacing:-0.3px;line-height:18.4px;color:#3a3a3a">請求情報をアプリに通知しました。</div>
<svg class="a" style="left:600px;top:32.5px" width="10" height="10" viewBox="0 0 10 10"><path d="M0.6 0.8 L9 9.1 M9 0.8 L0.6 9.1" stroke="#7a7a7a" stroke-width="1.2"/></svg>
<!-- callout -->
<div class="a" style="left:443px;top:127.5px;width:30px;height:30px;border-radius:50%;background:#6e4e36"></div>
<svg class="a" style="left:443px;top:127px" width="30" height="30" viewBox="443 127 30 30"><path d="M460.3 149.4 V135.6 L452 145.6 H463.6" fill="none" stroke="#fff" stroke-width="3.1" stroke-linejoin="round" stroke-linecap="round"/></svg>
<div class="a" style="left:485px;top:112px;width:423px;height:54px;border-radius:9px;background:#ffd600"></div>
<div class="a t" style="left:499px;top:128px;font-size:20px;color:#6e4e36;letter-spacing:1.3px;-webkit-text-stroke:0.4px #6e4e36">メッセージを確認し、</div>
<svg class="a" style="left:720px;top:125px" width="45" height="26" viewBox="720 125 45 26"><path d="M731.5 129 H725.2 V141.8 M735.9 131.8 L749 144.3 M749 131.8 L735.9 144.3 M753.8 147.2 H760 V134.4" fill="none" stroke="#6e4e36" stroke-width="1.9"/></svg>
<div class="a t" style="left:775px;top:128px;font-size:20px;color:#6e4e36;letter-spacing:1.9px;-webkit-text-stroke:0.4px #6e4e36">をクリック</div>
</body>
</html>
